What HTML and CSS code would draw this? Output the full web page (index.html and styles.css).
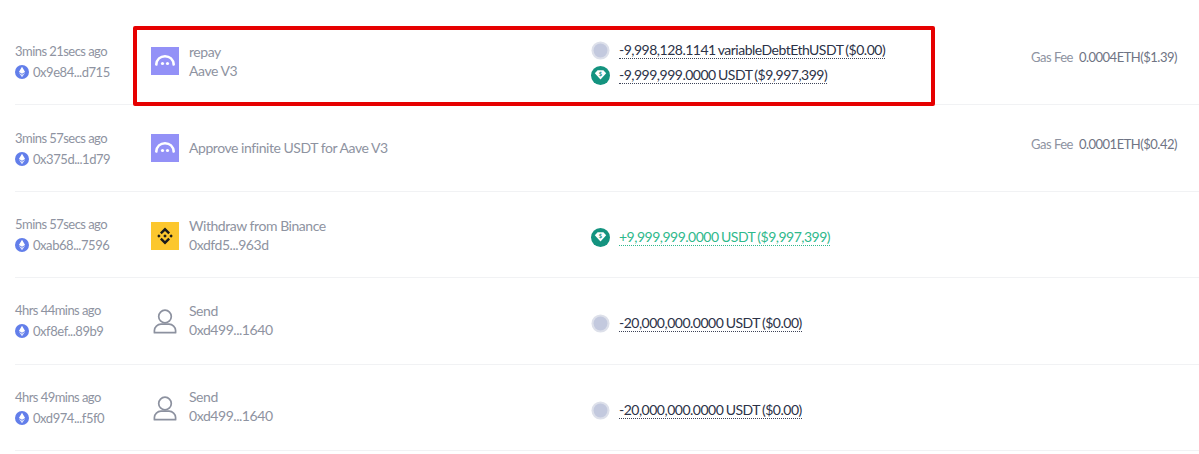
FILE: index.html
```html
<!DOCTYPE html>
<html lang="en">
<head>
<meta charset="utf-8">
<title>History</title>
<link rel="stylesheet" href="styles.css">
</head>
<body>
<svg class="defs" width="0" height="0" aria-hidden="true">
  <defs>
    <symbol id="eth" viewBox="0 0 14 14">
      <circle cx="7" cy="7" r="7" fill="#627eea"/>
      <path d="M7 1.8 3.9 7 7 8.8 10.100 7Z" fill="#fff"/>
      <path d="M7 9.700 3.900 7.800 7 12.200 10.100 7.800Z" fill="#dfe5fb"/>
    </symbol>
    <symbol id="aave" viewBox="0 0 28 28">
      <rect width="28" height="28" fill="#9391f7"/>
      <path d="M5.300 17.500C5.800 12.500 9.300 9.200 14 9.200S22.200 12.500 22.700 17.500" fill="none" stroke="#fff" stroke-width="2.600" stroke-linecap="round"/>
      <circle cx="11.500" cy="16.500" r="1.600" fill="#fff"/>
      <circle cx="16.500" cy="16.500" r="1.600" fill="#fff"/>
    </symbol>
    <symbol id="binance" viewBox="0 0 28 28">
      <rect width="28" height="28" fill="#fcc72e"/>
      <path d="M14 5.500 19 10.500 17.300 12.200 14 8.900 10.700 12.200 9 10.500Z M14 22.500 9 17.500 10.700 15.800 14 19.100 17.300 15.800 19 17.500Z M7.900 12.300 9.600 14 7.900 15.700 6.200 14Z M20.100 12.300 21.800 14 20.100 15.700 18.400 14Z M14 12.200 15.800 14 14 15.800 12.200 14Z" fill="#1a1a1a"/>
    </symbol>
    <symbol id="user" viewBox="0 0 28 28">
      <circle cx="14" cy="10.500" r="6.300" fill="none" stroke="#8c919f" stroke-width="1.700"/>
      <path d="M3.400 26.700V24.500C3.400 21 6.500 18.200 10 18.200H18C21.500 18.200 24.600 21 24.600 24.500V26.700Z" fill="none" stroke="#8c919f" stroke-width="1.700" stroke-linejoin="round"/>
    </symbol>
    <symbol id="debt" viewBox="0 0 20 20">
      <circle cx="10" cy="10" r="9.500" fill="#dde0ea"/>
      <circle cx="10" cy="10" r="7.300" fill="#c3c9de"/>
    </symbol>
    <symbol id="usdt" viewBox="0 0 20 20">
      <circle cx="10" cy="10" r="10" fill="#14937f"/>
      <path d="M7 4.400H13L16 7.700 10 14.200 4 7.700Z" fill="#fff"/>
      <text x="10" y="10.800" class="dollar">$</text>
    </symbol>
  </defs>
</svg>

<main class="list">
  <section class="row">
    <div class="when">
      <div class="time">3mins 21secs ago</div>
      <div class="hash"><svg class="chain"><use href="#eth"/></svg>0x9e84...d715</div>
    </div>
    <div class="action">
      <svg class="logo"><use href="#aave"/></svg>
      <div class="names"><div>repay</div><div>Aave V3</div></div>
    </div>
    <div class="tokens pair">
      <div class="token"><svg class="coin"><use href="#debt"/></svg><span class="amount">-9,998,128.1141 variableDebtEthUSDT ($0.00)</span></div>
      <div class="token"><svg class="coin"><use href="#usdt"/></svg><span class="amount">-9,999,999.0000 USDT ($9,997,399)</span></div>
    </div>
    <div class="gas"><span class="gas-label">Gas Fee</span><span class="gas-value">0.0004ETH($1.39)</span></div>
  </section>

  <section class="row">
    <div class="when">
      <div class="time">3mins 57secs ago</div>
      <div class="hash"><svg class="chain"><use href="#eth"/></svg>0x375d...1d79</div>
    </div>
    <div class="action">
      <svg class="logo"><use href="#aave"/></svg>
      <div class="names"><div>Approve infinite USDT for Aave V3</div></div>
    </div>
    <div class="tokens"></div>
    <div class="gas"><span class="gas-label">Gas Fee</span><span class="gas-value">0.0001ETH($0.42)</span></div>
  </section>

  <section class="row">
    <div class="when">
      <div class="time">5mins 57secs ago</div>
      <div class="hash"><svg class="chain"><use href="#eth"/></svg>0xab68...7596</div>
    </div>
    <div class="action low">
      <svg class="logo"><use href="#binance"/></svg>
      <div class="names"><div>Withdraw from Binance</div><div>0xdfd5...963d</div></div>
    </div>
    <div class="tokens">
      <div class="token"><svg class="coin"><use href="#usdt"/></svg><span class="amount plus">+9,999,999.0000 USDT ($9,997,399)</span></div>
    </div>
    <div class="gas"></div>
  </section>

  <section class="row">
    <div class="when">
      <div class="time">4hrs 44mins ago</div>
      <div class="hash"><svg class="chain"><use href="#eth"/></svg>0xf8ef...89b9</div>
    </div>
    <div class="action">
      <svg class="logo"><use href="#user"/></svg>
      <div class="names"><div>Send</div><div>0xd499...1640</div></div>
    </div>
    <div class="tokens">
      <div class="token"><svg class="coin"><use href="#debt"/></svg><span class="amount">-20,000,000.0000 USDT ($0.00)</span></div>
    </div>
    <div class="gas"></div>
  </section>

  <section class="row">
    <div class="when">
      <div class="time">4hrs 49mins ago</div>
      <div class="hash"><svg class="chain"><use href="#eth"/></svg>0xd974...f5f0</div>
    </div>
    <div class="action">
      <svg class="logo"><use href="#user"/></svg>
      <div class="names"><div>Send</div><div>0xd499...1640</div></div>
    </div>
    <div class="tokens">
      <div class="token"><svg class="coin"><use href="#debt"/></svg><span class="amount">-20,000,000.0000 USDT ($0.00)</span></div>
    </div>
    <div class="gas"></div>
  </section>
</main>

<div class="highlight"></div>
</body>
</html>
```
FILE: styles.css
```css
* { box-sizing: border-box; }

html, body {
  margin: 0;
  height: 454px;
  overflow: hidden;
  background: #fff;
}

body {
  position: relative;
  font-family: Lato, "Open Sans", sans-serif;
  font-size: 14px;
  letter-spacing: -0.5px;
  color: #8e93a1;
}

.defs { position: absolute; }

.dollar {
  font-family: Lato, sans-serif;
  font-size: 6px;
  font-weight: 700;
  letter-spacing: 0;
  fill: #14937f;
  text-anchor: middle;
}

.list { padding: 19px 0 0 15px; }

.row {
  display: flex;
  align-items: center;
  height: 86.4px;
  border-bottom: 1px solid #f1f2f4;
}

.when {
  width: 136px;
  flex: none;
  display: flex;
  flex-direction: column;
  gap: 5px;
}

.time { line-height: 16px; font-size: 13px; letter-spacing: -0.55px; }

.hash {
  display: flex;
  align-items: center;
  gap: 4px;
  line-height: 16px;
  font-size: 13px;
  letter-spacing: -0.45px;
}

.chain { width: 14px; height: 14px; flex: none; }

.action {
  width: 440px;
  flex: none;
  display: flex;
  align-items: center;
  gap: 10px;
  margin-top: -1px;
}

.action.low { margin-top: 3px; }

.logo { width: 28px; height: 28px; flex: none; }

.names {
  display: flex;
  flex-direction: column;
  gap: 3px;
  font-size: 14px;
  letter-spacing: -0.45px;
  line-height: 16px;
}

.tokens {
  width: 440px;
  flex: none;
  display: flex;
  flex-direction: column;
  gap: 5px;
  margin-top: 6px;
}

.tokens.pair { margin-top: 2px; }

.token {
  display: flex;
  align-items: center;
  gap: 9px;
  height: 20px;
}

.coin { width: 19px; height: 19px; flex: none; }

.amount {
  font-size: 14px;
  line-height: 16px;
  word-spacing: -0.7px;
  color: #2c3247;
  border-bottom: 1px dotted #3d4358;
}

.amount.plus {
  color: #2fb98c;
  border-bottom-color: #2fb98c;
}

.gas {
  display: flex;
  gap: 6px;
  align-items: center;
  font-size: 13px;
  margin-top: -9px;
}

.gas-label { color: #8e93a1; }
.gas-value { color: #6f7484; }

.highlight {
  position: absolute;
  left: 133px;
  top: 26px;
  width: 802px;
  height: 80px;
  border: 4px solid #e60000;
  border-radius: 2px;
}
```
